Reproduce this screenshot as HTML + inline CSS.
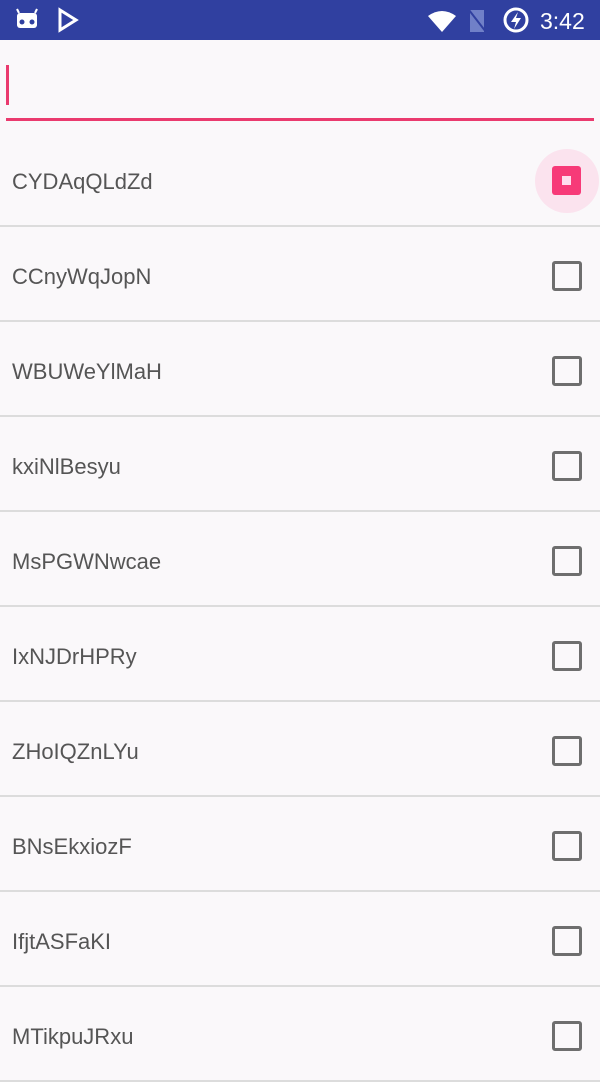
<!DOCTYPE html>
<html><head><style>
body{margin:0;width:600px;height:1067px;background:#faf8fa;font-family:"Liberation Sans",sans-serif;overflow:hidden;position:relative}
.sb{position:absolute;left:0;top:0;width:600px;height:40px;background:#3040a0;color:#fff}
.row{position:absolute;left:0;width:600px;height:93px;border-bottom:2px solid #dcdcdc}
.row span{position:absolute;left:12px;top:37px;font-size:22px;color:#555}
.cb{position:absolute;left:552px;top:34px;width:24px;height:24px;border:3px solid #6e6e6e;border-radius:3px}
</style></head><body>
<div class="sb">
<svg width="600" height="40" style="position:absolute;left:0;top:0">
<rect x="17" y="13" width="20" height="15" rx="3" fill="#fff"/><line x1="19" y1="13" x2="17" y2="9" stroke="#fff" stroke-width="2"/><line x1="35" y1="13" x2="37" y2="9" stroke="#fff" stroke-width="2"/>
<circle cx="22" cy="22" r="2.5" fill="#3040a0"/><circle cx="32" cy="22" r="2.5" fill="#3040a0"/>
<path d="M60 10 L76 20 L60 30 Z" fill="none" stroke="#fff" stroke-width="3"/>
<path d="M428 16 Q442 6 456 16 L442 32 Z" fill="#fff"/>
<path d="M470 10 L484 10 L484 32 L470 32 Z" fill="#7080c8"/><line x1="469" y1="10" x2="486" y2="32" stroke="#3040a0" stroke-width="2"/>
<circle cx="516" cy="20" r="11" fill="none" stroke="#fff" stroke-width="3"/><path d="M518 12 L511 22 L516 22 L514 29 L521 18 L516 18 Z" fill="#fff"/>
<text x="540" y="29" font-size="23" fill="#fff" font-family="Liberation Sans">3:42</text>
</svg></div>
<div style="position:absolute;left:6px;top:65px;width:3px;height:40px;background:#ea3a6e"></div>
<div style="position:absolute;left:6px;top:118px;width:588px;height:3px;background:#ea3a6e"></div>
<div class="row" style="top:132px"><span>CYDAqQLdZd</span>
<div style="position:absolute;left:535px;top:17px;width:64px;height:64px;border-radius:50%;background:#fbe3ee"></div>
<div style="position:absolute;left:552px;top:34px;width:29px;height:29px;border-radius:3px;background:#f73a78"><div style="position:absolute;left:10px;top:10px;width:9px;height:9px;background:#fde"></div></div></div>
<div class="row" style="top:227px"><span>CCnyWqJopN</span><div class="cb"></div></div>
<div class="row" style="top:322px"><span>WBUWeYlMaH</span><div class="cb"></div></div>
<div class="row" style="top:417px"><span>kxiNlBesyu</span><div class="cb"></div></div>
<div class="row" style="top:512px"><span>MsPGWNwcae</span><div class="cb"></div></div>
<div class="row" style="top:607px"><span>IxNJDrHPRy</span><div class="cb"></div></div>
<div class="row" style="top:702px"><span>ZHoIQZnLYu</span><div class="cb"></div></div>
<div class="row" style="top:797px"><span>BNsEkxiozF</span><div class="cb"></div></div>
<div class="row" style="top:892px"><span>IfjtASFaKI</span><div class="cb"></div></div>
<div class="row" style="top:987px"><span>MTikpuJRxu</span><div class="cb"></div></div>
</body></html>
